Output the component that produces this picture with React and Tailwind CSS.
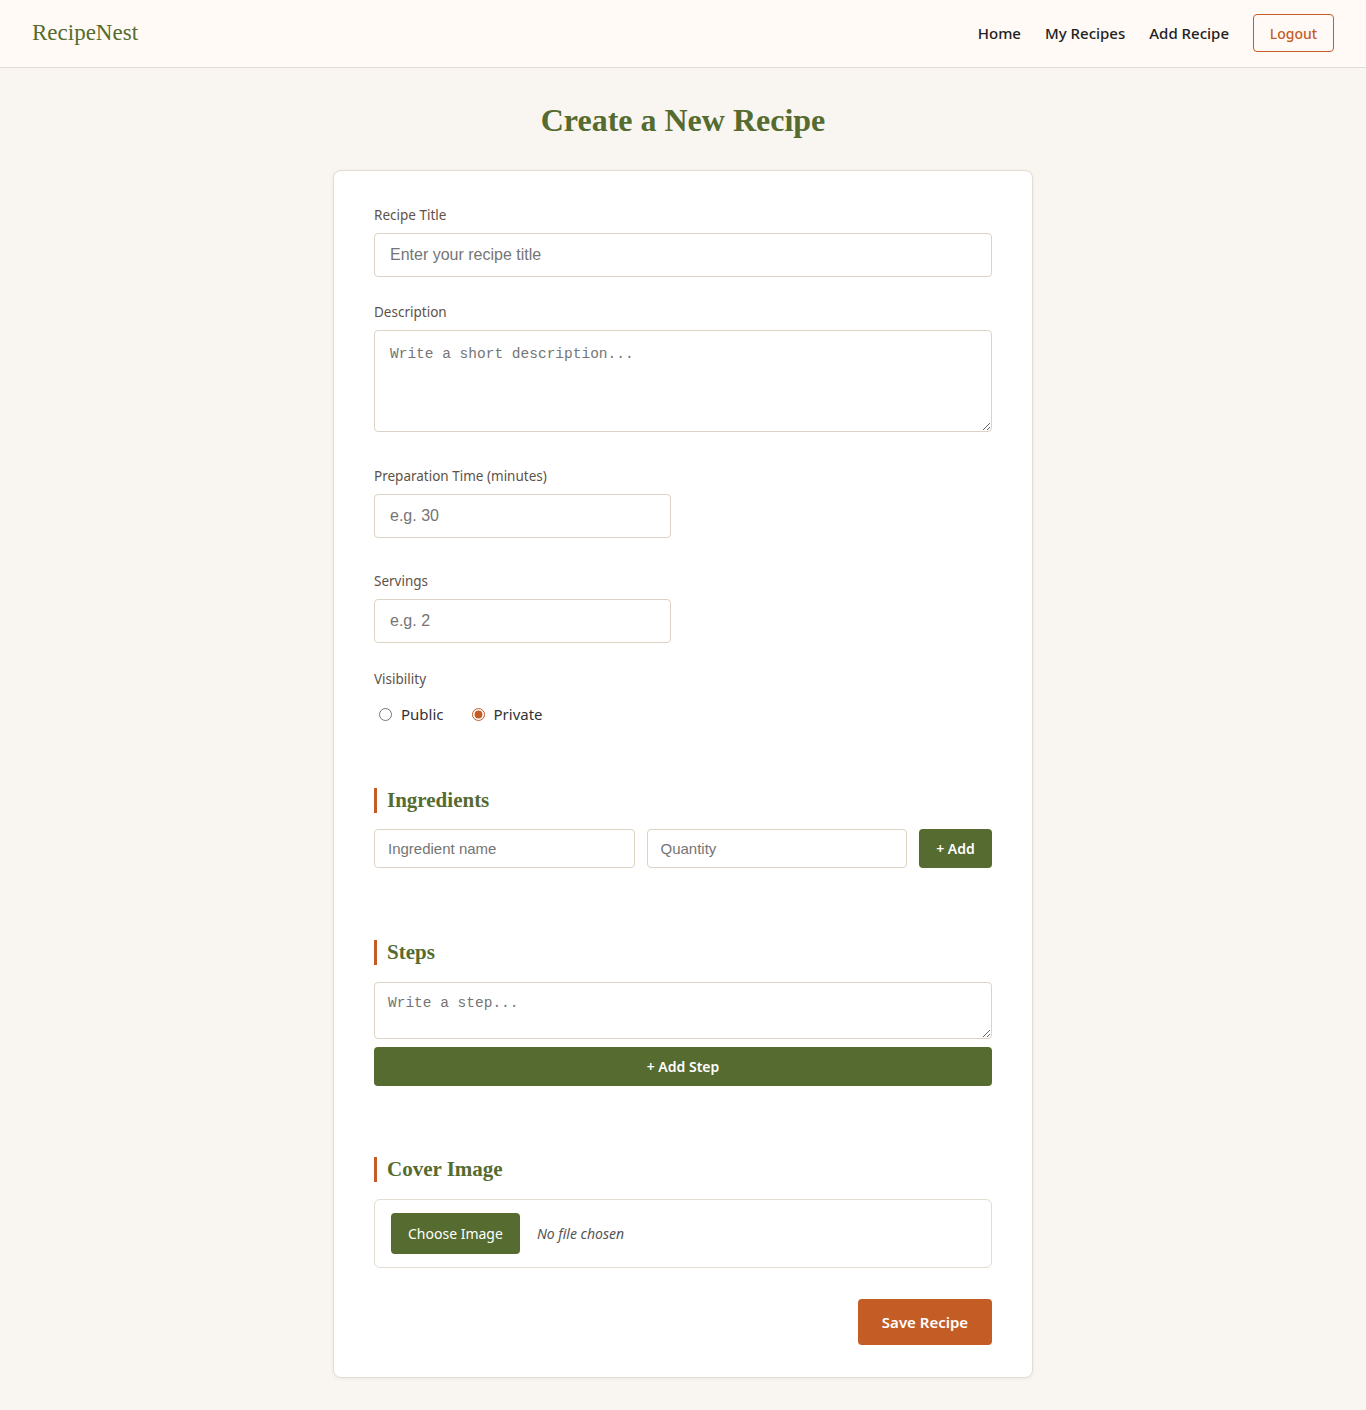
import { useState } from 'react';

const sans = { fontFamily: '"Noto Sans", "Open Sans", sans-serif' };

function Field({ label, className = '', children }) {
    return (
        <div className={className}>
            <label className="block text-[13.5px] leading-5 text-[#5e5249] mb-2">{label}</label>
            {children}
        </div>
    );
}

function SectionTitle({ children }) {
    return (
        <h2 className="border-l-[3px] border-[#c45c26] pl-[10px] h-[25px] flex items-center font-['Liberation_Serif',serif] font-bold text-[21px] text-[#556b2f] leading-none">
            {children}
        </h2>
    );
}

export default function App() {
    const [visibility, setVisibility] = useState('private');

    return (
        <div className="min-h-[1410px] bg-[#f9f6f1]" style={sans}>
            {/* Top bar */}
            <nav className="h-[68px] bg-[#fffaf6] border-b border-[#e2dcd4] flex items-center justify-between pl-8 pr-8">
                <span className="font-['Liberation_Serif',serif] text-[23px] text-[#556b2f]">RecipeNest</span>
                <div className="flex items-center pb-[2px]">
                    <a className="text-[15px] font-medium text-[#222] mr-6 pt-[2px]">Home</a>
                    <a className="text-[15px] font-medium text-[#222] mr-6 pt-[2px]">My Recipes</a>
                    <a className="text-[15px] font-medium text-[#222] mr-6 pt-[2px]">Add Recipe</a>
                    <button className="h-[38px] w-[81px] border border-[#c45c26] rounded-[4px] text-[14px] font-medium text-[#c45c26] pt-[2px]">Logout</button>
                </div>
            </nav>

            <h1 className="text-center font-['Liberation_Serif',serif] font-bold text-[32px] text-[#556b2f] pt-[29px] pb-[27px] leading-[46px]">
                Create a New Recipe
            </h1>

            <div className="mx-auto w-[700px] bg-white border border-[#e3dcd1] rounded-[8px] shadow-[0_1px_4px_rgba(0,0,0,0.06)] pt-[34px] pb-[32px] px-10">
                <Field label="Recipe Title" className="mb-[25px]">
                    <input placeholder="Enter your recipe title" className="w-full h-[44px] px-[15px] border border-[#ddd3c4] rounded-[4px] font-['Liberation_Sans',sans-serif] text-[16px] placeholder:text-[#757575] outline-none" />
                </Field>

                <Field label="Description" className="mb-[34px]">
                    <textarea placeholder="Write a short description..." className="block w-full h-[102px] px-[15px] py-[13px] border border-[#ddd3c4] rounded-[4px] font-['Liberation_Mono',monospace] text-[14.5px] placeholder:text-[#757575] outline-none" />
                </Field>

                <Field label="Preparation Time (minutes)" className="mb-[33px]">
                    <input placeholder="e.g. 30" className="w-[297px] h-[44px] px-[15px] border border-[#ddd3c4] rounded-[4px] font-['Liberation_Sans',sans-serif] text-[16px] placeholder:text-[#757575] outline-none" />
                </Field>

                <Field label="Servings" className="mb-[26px]">
                    <input placeholder="e.g. 2" className="w-[297px] h-[44px] px-[15px] border border-[#ddd3c4] rounded-[4px] font-['Liberation_Sans',sans-serif] text-[16px] placeholder:text-[#757575] outline-none" />
                </Field>

                <Field label="Visibility" className="mb-[64px]">
                    <div className="flex items-center h-5 mt-[15px] pl-[5px] text-[15px] text-[#333]">
                        <label className="flex items-center mr-[28px]">
                            <input type="radio" name="vis" checked={visibility === 'public'} onChange={() => setVisibility('public')} className="w-[13px] h-[13px] m-0 mr-[9px] accent-[#c45c26]" />
                            Public
                        </label>
                        <label className="flex items-center">
                            <input type="radio" name="vis" checked={visibility === 'private'} onChange={() => setVisibility('private')} className="w-[13px] h-[13px] m-0 mr-[9px] accent-[#c45c26]" />
                            Private
                        </label>
                    </div>
                </Field>

                {/* Ingredients */}
                <SectionTitle>Ingredients</SectionTitle>
                <div className="flex gap-3 mt-[16px] mb-[72px]">
                    <input placeholder="Ingredient name" className="flex-1 min-w-0 h-[39px] px-[13px] border border-[#ddd3c4] rounded-[4px] font-['Liberation_Sans',sans-serif] text-[15px] placeholder:text-[#757575] outline-none" />
                    <input placeholder="Quantity" className="flex-1 min-w-0 h-[39px] px-[13px] border border-[#ddd3c4] rounded-[4px] font-['Liberation_Sans',sans-serif] text-[15px] placeholder:text-[#757575] outline-none" />
                    <button className="w-[73px] h-[39px] bg-[#556b2f] text-white rounded-[4px] text-[14px] font-semibold">+ Add</button>
                </div>

                {/* Steps */}
                <SectionTitle>Steps</SectionTitle>
                <textarea placeholder="Write a step..." className="block w-full h-[57px] mt-[17px] px-[13px] py-[10px] border border-[#ddd3c4] rounded-[4px] font-['Liberation_Mono',monospace] text-[14.5px] placeholder:text-[#757575] outline-none" />
                <button className="w-full h-[39px] mt-2 mb-[71px] bg-[#556b2f] text-white rounded-[4px] text-[14px] font-semibold">+ Add Step</button>

                {/* Cover image */}
                <SectionTitle>Cover Image</SectionTitle>
                <div className="mt-[17px] h-[69px] border border-[#e3dcd1] rounded-[6px] flex items-center px-4">
                    <label className="h-[41px] px-[17px] bg-[#556b2f] text-white rounded-[4px] text-[14px] flex items-center cursor-pointer">
                        Choose Image
                        <input type="file" className="hidden" />
                    </label>
                    <span className="ml-[17px] text-[14px] italic text-[#555]">No file chosen</span>
                </div>

                <div className="flex justify-end mt-[31px]">
                    <button className="w-[134px] h-[46px] bg-[#c45c26] text-white rounded-[4px] text-[15px] font-semibold">Save Recipe</button>
                </div>
            </div>
        </div>
    );
}
